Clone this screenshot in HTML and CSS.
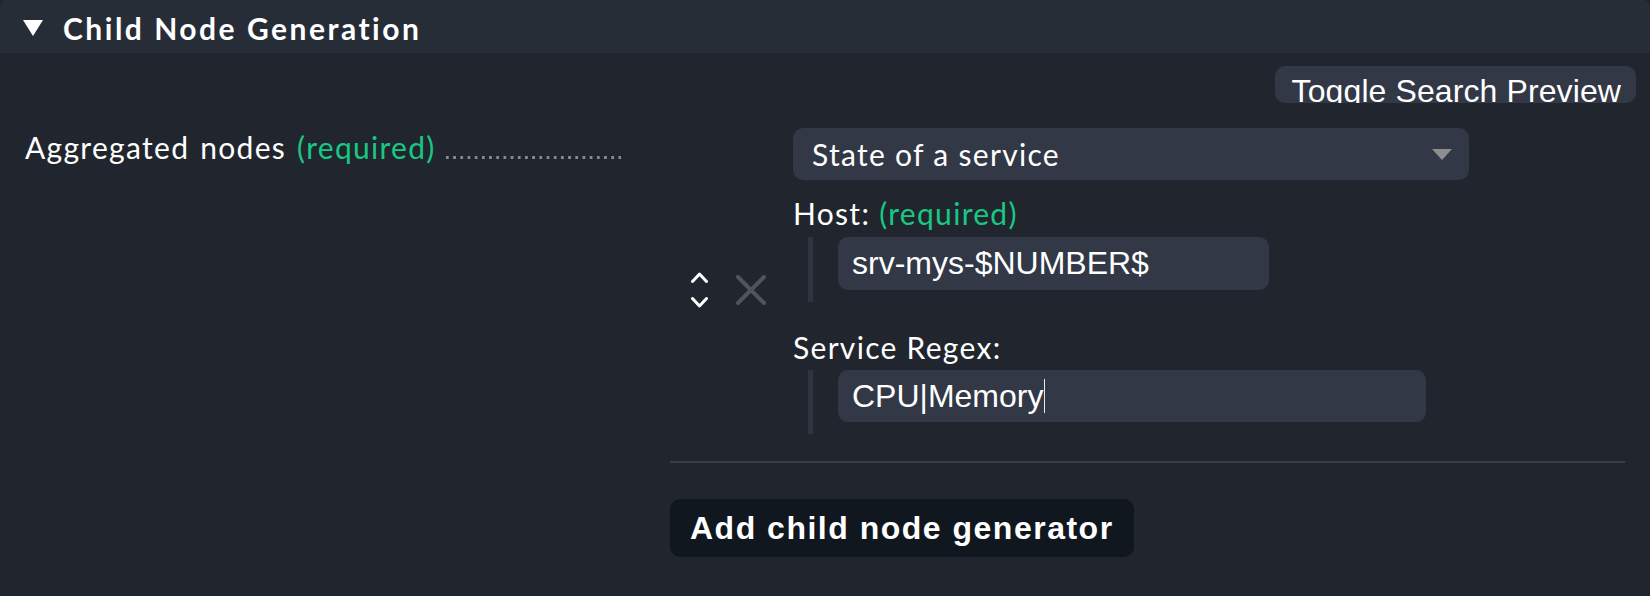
FILE: index.html
```html
<!DOCTYPE html>
<html>
<head>
<meta charset="utf-8">
<link rel="stylesheet" href="styles.css">
</head>
<body>
<div class="foldable">
  <div class="fold-header">
    <svg class="fold-tri" width="20" height="16" viewBox="0 0 20 16"><polygon points="0,0 20,0 10,16" fill="#ffffff"/></svg>
    <span class="fold-title">Child Node Generation</span>
  </div>
  <div class="fold-body">
    <div class="toolbar">
      <div class="toggle-btn">Toggle Search Preview</div>
    </div>
    <div class="form-row">
      <div class="form-label">
        <span class="label-text">Aggregated nodes <span class="req">(required)</span></span>
        <span class="dots"></span>
      </div>
      <div class="form-content">
        <div class="entry">
          <div class="controls">
            <svg class="updown" width="17" height="36" viewBox="0 0 17 36">
              <polyline points="1.5,9.5 8.5,2 15.5,9.5" fill="none" stroke="#ffffff" stroke-width="3" stroke-linecap="round" stroke-linejoin="round"/>
              <polyline points="1.5,26.5 8.5,34 15.5,26.5" fill="none" stroke="#ffffff" stroke-width="3" stroke-linecap="round" stroke-linejoin="round"/>
            </svg>
            <svg class="delete" width="30" height="30" viewBox="0 0 30 30">
              <line x1="2" y1="2" x2="28" y2="28" stroke="#50555d" stroke-width="4" stroke-linecap="round"/>
              <line x1="28" y1="2" x2="2" y2="28" stroke="#50555d" stroke-width="4" stroke-linecap="round"/>
            </svg>
          </div>
          <div class="fields">
            <div class="select">
              <span class="select-text">State of a service</span>
              <svg class="select-arrow" width="20" height="11" viewBox="0 0 20 11"><polygon points="0,0 20,0 10,11" fill="#8e8e8e"/></svg>
            </div>
            <div class="field-label host-label">Host: <span class="req">(required)</span></div>
            <div class="indent">
              <div class="text-input host-input">srv-mys-$NUMBER$</div>
            </div>
            <div class="field-label regex-label">Service Regex:</div>
            <div class="indent">
              <div class="text-input regex-input">CPU|Memory<span class="caret"></span></div>
            </div>
          </div>
        </div>
        <div class="separator"></div>
        <div class="add-btn">Add child node generator</div>
      </div>
    </div>
  </div>
</div>
</body>
</html>
```

FILE: styles.css
```css
html, body {
  margin: 0;
  padding: 0;
  background: #21262e;
}
body {
  width: 1650px;
  height: 596px;
  overflow: hidden;
  font-family: "Lato", "Liberation Sans", sans-serif;
  color: #ffffff;
}
.foldable {
  background: #21262e;
  height: 596px;
}
.fold-header {
  height: 53px;
  background: #272d37;
  border-radius: 8px 8px 0 0;
  display: flex;
  align-items: center;
  padding-left: 23px;
  box-sizing: border-box;
}
.fold-tri {
  display: block;
  margin-top: 3px;
}
.fold-title {
  margin-left: 20px;
  font-weight: bold;
  font-size: 30px;
  letter-spacing: 2.5px;
  line-height: 36px;
  margin-top: 3px;
}
.fold-body {
  padding: 13px 14px 0 25px;
}
.toolbar {
  display: flex;
  justify-content: flex-end;
}
.toggle-btn {
  font-family: "Liberation Sans", Arial, sans-serif;
  font-size: 32px;
  letter-spacing: 0.1px;
  line-height: 32px;
  height: 37px;
  box-sizing: border-box;
  padding: 9px 15px 0 17px;
  overflow: hidden;
  background: #323846;
  border-radius: 10px;
  white-space: nowrap;
}
.form-row {
  display: flex;
  margin-top: 25px;
}
.form-label {
  width: 645px;
  box-sizing: border-box;
  padding-right: 49px;
  padding-top: 1px;
  display: flex;
  align-items: baseline;
  font-size: 30px;
  letter-spacing: 1.3px;
  line-height: 36px;
  height: 38px;
}
.label-text {
  white-space: nowrap;
  word-spacing: 2px;
}
.req {
  color: #19c882;
}
.dots {
  flex: 1;
  margin-left: 10px;
  height: 3px;
  background-image: linear-gradient(to right, #868b92 0 3px, transparent 3px);
  background-size: 7.2px 3px;
  background-repeat: repeat-x;
}
.form-content {
  flex: 1;
  padding-right: 11px;
}
.entry {
  display: flex;
  align-items: center;
}
.controls {
  width: 123px;
  box-sizing: border-box;
  padding-left: 21px;
  display: flex;
  align-items: center;
}
.updown {
  display: block;
}
.delete {
  display: block;
  margin-left: 28px;
}
.fields {
  flex: 1;
  padding-bottom: 18px;
}
.select {
  width: 676px;
  height: 52px;
  box-sizing: border-box;
  background: #323846;
  border-radius: 10px;
  display: flex;
  align-items: center;
  justify-content: space-between;
  padding: 0 17px 0 19px;
  font-size: 30px;
  letter-spacing: 1.3px;
}
.select-arrow {
  display: block;
}
.field-label {
  font-size: 30px;
  letter-spacing: 1.3px;
  line-height: 36px;
  margin-top: 15px;
}
.regex-label {
  margin-top: 27px;
}
.indent {
  margin-top: 5px;
  margin-left: 15px;
  border-left: 5px solid #2f3440;
  padding-left: 25px;
  padding-bottom: 12px;
}
.host-label + .indent {
  margin-top: 6px;
}
.text-input {
  height: 53px;
  box-sizing: border-box;
  background: #323846;
  border-radius: 10px;
  display: flex;
  align-items: center;
  padding-left: 14px;
  font-family: "Liberation Sans", Arial, sans-serif;
  font-size: 32px;
}
.host-input {
  width: 431px;
}
.regex-input {
  width: 588px;
  height: 52px;
}
.caret {
  display: inline-block;
  width: 1px;
  height: 34px;
  background: #e8e8e8;
  margin-left: 1px;
}
.separator {
  height: 2px;
  background: #3b3e43;
  margin-top: 9px;
}
.add-btn {
  display: inline-block;
  margin-top: 36px;
  height: 58px;
  box-sizing: border-box;
  line-height: 58px;
  padding: 0 20px;
  background: #11171e;
  border-radius: 10px;
  font-family: "Liberation Sans", Arial, sans-serif;
  font-weight: bold;
  font-size: 32px;
  letter-spacing: 1.5px;
  white-space: nowrap;
}
```
